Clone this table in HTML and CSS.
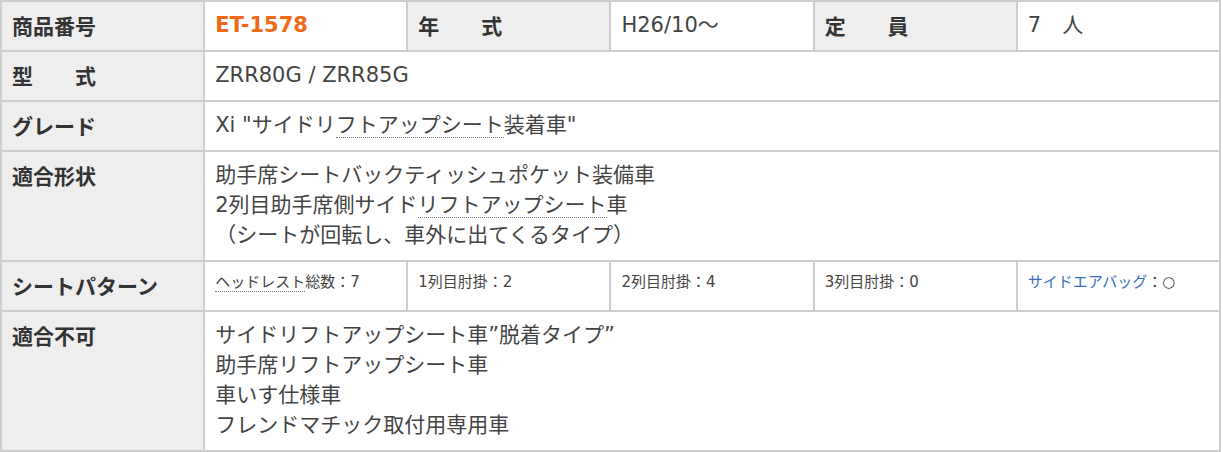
FILE: index.html
```html
<!DOCTYPE html>
<html lang="ja">
<head>
<meta charset="utf-8">
<title>適合情報</title>
<link rel="stylesheet" href="styles.css">
</head>
<body>
<table class="spec">
  <colgroup>
    <col class="c"><col class="c"><col class="c"><col class="c"><col class="c"><col class="c">
  </colgroup>
  <tr>
    <th><div class="ln">商品番号</div></th>
    <td class="code"><div class="ln">ET-1578</div></td>
    <th><div class="ln">年　　式</div></th>
    <td><div class="ln">H26/10～</div></td>
    <th><div class="ln">定　　員</div></th>
    <td><div class="ln">7　人</div></td>
  </tr>
  <tr>
    <th><div class="ln">型　　式</div></th>
    <td colspan="5"><div class="ln">ZRR80G / ZRR85G</div></td>
  </tr>
  <tr>
    <th><div class="ln">グレード</div></th>
    <td colspan="5"><div class="ln">Xi "サイドリ<span class="term">フトアップシート</span>装着車"</div></td>
  </tr>
  <tr>
    <th><div class="ln">適合形状</div></th>
    <td colspan="5">
      <div class="ln">助手席シートバックティッシュポケット装備車</div>
      <div class="ln">2列目助手席側サイド<span class="term">リフトアップシート</span>車</div>
      <div class="ln">（シートが回転し、車外に出てくるタイプ）</div>
    </td>
  </tr>
  <tr class="seat">
    <th><div class="ln">シートパターン</div></th>
    <td><div class="ln"><span class="term">ヘッドレスト</span>総数：7</div></td>
    <td><div class="ln">1列目肘掛：2</div></td>
    <td><div class="ln">2列目肘掛：4</div></td>
    <td><div class="ln">3列目肘掛：0</div></td>
    <td><div class="ln"><span class="airbag">サイドエアバッグ</span>：○</div></td>
  </tr>
  <tr>
    <th><div class="ln">適合不可</div></th>
    <td colspan="5">
      <div class="ln">サイドリフトアップシート車”脱着タイプ”</div>
      <div class="ln">助手席リフトアップシート車</div>
      <div class="ln">車いす仕様車</div>
      <div class="ln">フレンドマチック取付用専用車</div>
    </td>
  </tr>
</table>
</body>
</html>
```
FILE: styles.css
```css
html, body {
  margin: 0;
  padding: 0;
  background: #fff;
}

body {
  font-family: "DejaVu Sans", "Noto Sans CJK JP", sans-serif;
  color: #444;
}

.spec {
  width: 1221px;
  table-layout: fixed;
  border-collapse: collapse;
}

.spec th,
.spec td {
  border: 2px solid #cdcdcd;
  padding: 8px 10px 10px 10px;
  font-size: 21px;
  line-height: 30px;
  vertical-align: top;
  text-align: left;
  overflow: hidden;
  white-space: nowrap;
}

.ln {
  height: 30px;
}

.spec th {
  background: #eeeeee;
  color: #333;
  font-weight: bold;
  font-family: "Noto Sans CJK JP", sans-serif;
}

.spec td {
  background: #fff;
  font-weight: normal;
}

.spec td.code {
  color: #ee6a18;
  font-weight: bold;
}

.seat td {
  font-size: 15px;
  line-height: 24px;
}

.seat td .ln {
  height: 24px;
}

.term {
  border-bottom: 1px dotted #777;
}

.airbag {
  color: #3a70bf;
}
```
